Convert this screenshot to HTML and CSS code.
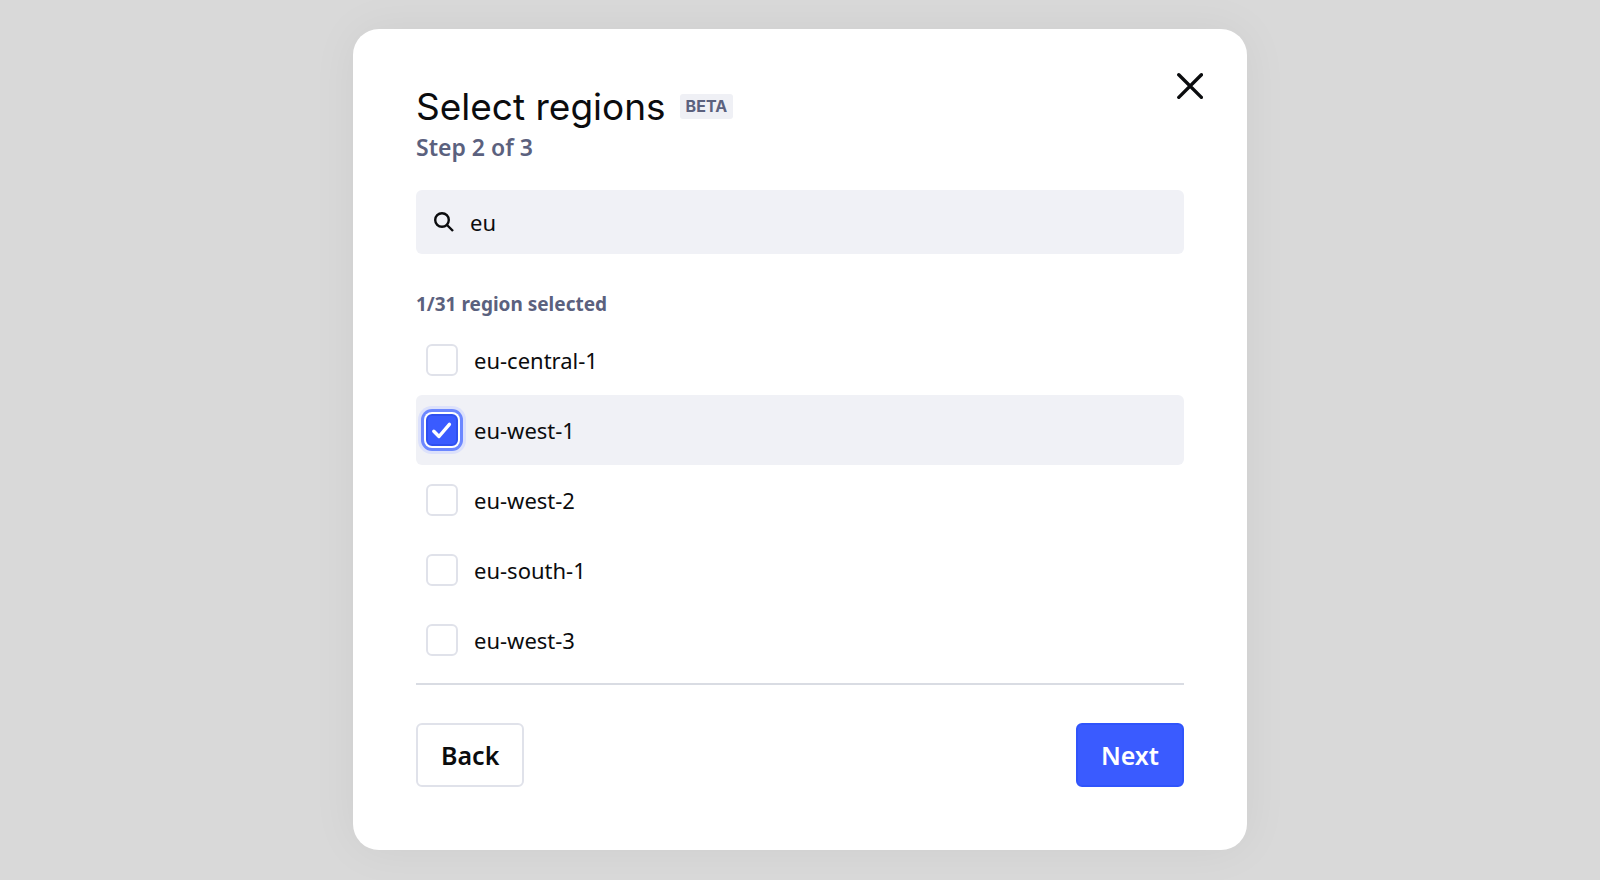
FILE: index.html
```
<!DOCTYPE html>
<html lang="en">
<head>
	<meta charset="UTF-8">
	<meta name="viewport" content="width=device-width, initial-scale=1">
	<title>Select regions</title>
	<link rel="stylesheet" href="styles.css">
</head>
<body>
	<form class="modal" role="dialog" aria-labelledby="modal-title">
		<button class="close" type="button" aria-label="Close">
			<svg viewBox="0 0 26 26" width="26" height="26"><path d="M1.8 1.8l22.6 22.6M24.4 1.8L1.8 24.4"/></svg>
		</button>

		<header class="modal-header">
			<div class="title-row">
				<h1 class="title" id="modal-title">Select regions</h1>
				<span class="badge">BETA</span>
			</div>
			<p class="step">Step 2 of 3</p>
		</header>

		<label class="search">
			<svg class="search-icon" viewBox="0 0 20 20" width="20" height="20"><circle cx="8" cy="8" r="6.8"/><path d="M13 13l6 6"/></svg>
			<input class="search-input" type="text" value="eu" aria-label="Search regions">
		</label>

		<p class="count">1/31 region selected</p>

		<!-- region list -->
		<ul class="regions">
			<li><label class="region"><input class="checkbox" type="checkbox"><span>eu-central-1</span></label></li>
			<li>
				<label class="region selected">
					<span class="check-wrap">
						<input class="checkbox" type="checkbox" checked>
						<svg class="tick" viewBox="0 0 32 32" width="32" height="32"><path d="M7.8 17.2l5.2 5.3L23.4 10.3"/></svg>
					</span>
					<span>eu-west-1</span>
				</label>
			</li>
			<li><label class="region"><input class="checkbox" type="checkbox"><span>eu-west-2</span></label></li>
			<li><label class="region"><input class="checkbox" type="checkbox"><span>eu-south-1</span></label></li>
			<li><label class="region"><input class="checkbox" type="checkbox"><span>eu-west-3</span></label></li>
		</ul>

		<footer class="modal-footer">
			<button class="btn" type="button">Back</button>
			<button class="btn btn-primary" type="submit">Next</button>
		</footer>
	</form>
</body>
</html>
```
FILE: styles.css
```
*{
	box-sizing:border-box;
	margin:0;
	padding:0;
}
body{
	display:flex;
	justify-content:center;
	align-items:center;
	min-height:100vh;
	padding-bottom:2px;
	background:#d9d9d9;
	color:#0b0c0e;
	font-family:"Noto Sans", sans-serif;
	font-size:22px;
	line-height:32px;
}
ul{
	list-style:none;
}
input,
button{
	color:inherit;
	font:inherit;
}
.modal{
	position:relative;
	width:100%;
	max-width:894px;
	padding:56px 63px 63px;
	border-radius:26px;
	background:#fff;
	box-shadow:0 0 48px rgba(0,0,0,0.05);
}
.close{
	position:absolute;
	top:40px;
	right:40px;
	display:flex;
	padding:4px;
	border:0;
	background:none;
}
.close svg{
	fill:none;
	stroke:#0b0c0e;
	stroke-width:3.4;
	stroke-linecap:round;
}
.title-row{
	display:flex;
	align-items:center;
	gap:14px;
}
.title{
	font-family:Inter, sans-serif;
	font-size:37px;
	font-weight:400;
	line-height:44px;
}
.badge{
	padding:0 6px;
	border-radius:3px;
	background:#eff0f5;
	color:#5b617e;
	font-family:Inter, sans-serif;
	font-size:16px;
	font-weight:700;
	line-height:25px;
}
.step{
	margin-top:2px;
	color:#5b617e;
	font-size:23px;
	font-weight:600;
}
.search{
	display:flex;
	align-items:center;
	gap:16px;
	height:64px;
	margin-top:27px;
	padding:0 18px;
	border-radius:6px;
	background:#f0f1f6;
}
.search-icon{
	fill:none;
	stroke:#0b0c0e;
	stroke-width:2.4;
}
.search-input{
	flex:1;
	min-width:0;
	border:0;
	outline:0;
	background:none;
}
.count{
	margin-top:36px;
	color:#5b617e;
	font-size:19px;
	font-weight:700;
	line-height:28px;
}
.regions{
	margin-top:7px;
	padding-bottom:8px;
	border-bottom:2px solid #d9dce3;
}
.region{
	display:flex;
	align-items:center;
	gap:16px;
	height:70px;
	padding:0 10px;
	border-radius:6px;
}
.selected{
	background:#f0f1f6;
}
.checkbox{
	appearance:none;
	display:block;
	width:32px;
	height:32px;
	border:2px solid #e0e2ea;
	border-radius:6px;
	background:#fff;
}
.checkbox:checked{
	border-color:#2f50f0;
	background:#3a5bff;
	box-shadow:0 0 0 2px #fff, 0 0 0 5px #6c87ff, 0 0 0 8px #dce1fb;
}
.check-wrap{
	position:relative;
}
.tick{
	position:absolute;
	top:0;
	left:0;
	fill:none;
	stroke:#fff;
	stroke-width:3.4;
	stroke-linecap:round;
	stroke-linejoin:round;
}
.modal-footer{
	display:flex;
	justify-content:space-between;
	margin-top:38px;
}
.btn{
	height:64px;
	padding:0 23px;
	border:2px solid #e0e2ea;
	border-radius:6px;
	background:#fff;
	font-size:25px;
	font-weight:600;
}
.btn-primary{
	border-color:#3054fb;
	background:#3a5bff;
	color:#fff;
}
```
